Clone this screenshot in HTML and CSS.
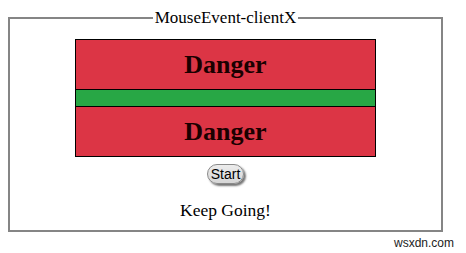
FILE: index.html
```html
<!DOCTYPE html>
<html lang="en">
<head>
    <meta charset="UTF-8">
    <title>MouseEvent-clientX</title>
    <link rel="stylesheet" href="styles.css">
</head>
<body>
    <div class="frame">
        <fieldset class="demo">
            <legend>MouseEvent-clientX</legend>
            <div class="track">
                <div class="zone danger">Danger</div>
                <div class="zone safe"></div>
                <div class="zone danger">Danger</div>
            </div>
            <button class="start-btn">Start</button>
            <p class="status">Keep Going!</p>
        </fieldset>
    </div>
    <div class="watermark">wsxdn.com</div>
</body>
</html>
```

FILE: styles.css
```css
body {
    margin: 8px;
    font-family: "Liberation Serif", "Times New Roman", serif;
    color: #000;
    background: #fff;
}

.frame {
    width: 435px;
}

.demo {
    min-width: 0;
    margin: 0;
    padding: 11px 0 0 0;
    border: 2px solid #858585;
    text-align: center;
}

.demo legend {
    margin: 0 auto;
    padding: 0 2px;
    font-size: 17px;
}

.track {
    width: 299px;
    margin: 0 auto;
    border: 1px solid #000;
}

.zone {
    font-weight: bold;
    font-size: 26px;
}

.danger {
    height: 49px;
    line-height: 49px;
    background-color: #dc3545;
    color: #1a0000;
}

.safe {
    height: 16px;
    background-color: #28a745;
    border-top: 1px solid #000;
    border-bottom: 1px solid #000;
}

.start-btn {
    margin-top: 7px;
    padding: 0 3px;
    height: 20px;
    font-family: "Liberation Sans", Arial, sans-serif;
    font-size: 14px;
    color: #000;
    background: linear-gradient(to bottom, #ececec, #d6d6d6);
    border: 1px solid #8a8a8a;
    border-radius: 10px;
    box-shadow: 2px 2px 2px #777;
}

.status {
    margin: 16px 0 9px;
    font-size: 17.5px;
}

.watermark {
    text-align: right;
    padding: 4px 4px 0 0;
    font-family: "Liberation Sans", Arial, sans-serif;
    font-size: 12px;
    color: #222;
}
```
